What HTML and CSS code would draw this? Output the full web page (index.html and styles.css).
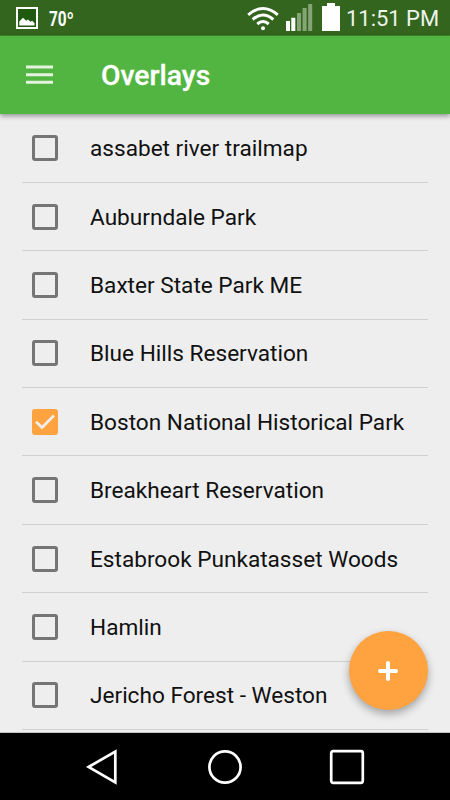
FILE: index.html
```html
<!DOCTYPE html>
<html lang="en">
<head>
<meta charset="utf-8">
<title>Overlays</title>
<link rel="stylesheet" href="styles.css">
</head>
<body>
<div class="screen">
  <div class="status">
    <svg class="picture" width="22" height="22" viewBox="0 0 22 22"><rect x="1" y="1" width="20" height="20" fill="#1f5a10" stroke="#fff" stroke-width="2"/><path d="M3.300 18.500v-4l3.700-3.800 3.200 3 1.800-1.200 2.500 2.200 1.700-1 2.300 2.200v2.600z" fill="#fff"/></svg>
    <span class="temp">70º</span>
    <svg class="wifi" width="32" height="25" viewBox="0 0 32 25" fill="none" stroke="#fff" stroke-width="3"><path d="M1.200 8.800Q16-3.800 30.800 8.800"/><path d="M5.700 13.500Q16 4.500 26.300 13.500"/><path d="M10.300 18Q16 13 21.700 18"/><circle cx="16" cy="22.300" r="2" fill="#fff" stroke="none"/></svg>
    <svg class="signal" width="27" height="27" viewBox="0 0 27 27" fill="#fff"><path d="M0 17h4v10H0zM5.300 13.700h4V27h-4z"/><path d="M11 9h4v18h-4zM16.600 4h4v23h-4zM22.200 0h4v27h-4z" fill="#86a577"/></svg>
    <svg class="battery" width="18" height="28" viewBox="0 0 18 28"><path d="M5 0h8v3h5v25H0V3h5z" fill="#fff"/></svg>
    <span class="clock">11:51 PM</span>
  </div>
  <header class="bar">
    <svg class="menu" width="27" height="20" viewBox="0 0 27 20" fill="#e3f3dd"><path d="M0 .5h27v3H0zM0 8.200h27v3H0zM0 15.700h27v3H0z"/></svg>
    <h1>Overlays</h1>
  </header>
  <main class="list">
    <label class="row"><span class="box"></span><span class="name">assabet river trailmap</span></label>
    <label class="row"><span class="box"></span><span class="name">Auburndale Park</span></label>
    <label class="row"><span class="box"></span><span class="name">Baxter State Park ME</span></label>
    <label class="row"><span class="box"></span><span class="name">Blue Hills Reservation</span></label>
    <label class="row"><span class="box checked"><svg width="26" height="26" viewBox="0 0 26 26"><path d="M4 12.700l6 5.800L22 6.500" fill="none" stroke="#eee" stroke-width="2.800"/></svg></span><span class="name">Boston National Historical Park</span></label>
    <label class="row"><span class="box"></span><span class="name">Breakheart Reservation</span></label>
    <label class="row"><span class="box"></span><span class="name">Estabrook Punkatasset Woods</span></label>
    <label class="row"><span class="box"></span><span class="name">Hamlin</span></label>
    <label class="row"><span class="box"></span><span class="name">Jericho Forest - Weston</span></label>
  </main>
  <button class="fab" aria-label="Add"><svg width="20" height="20" viewBox="0 0 20 20"><path d="M10 2v16M2 10h16" stroke="#fff" stroke-width="4" stroke-linecap="round"/></svg></button>
  <nav class="nav">
    <svg width="32" height="36" viewBox="0 0 32 36"><path d="M2.500 18L29.300 2.500v31z" fill="none" stroke="#fff" stroke-width="2.700"/></svg>
    <svg width="36" height="36" viewBox="0 0 36 36"><circle cx="18" cy="18" r="15.600" fill="none" stroke="#fff" stroke-width="2.700"/></svg>
    <svg width="36" height="36" viewBox="0 0 36 36"><rect x="2.200" y="2.200" width="31.600" height="31.600" rx="2" fill="none" stroke="#fff" stroke-width="2.700"/></svg>
  </nav>
</div>
</body>
</html>
```

FILE: styles.css
```css
* { box-sizing: border-box; }
body { margin: 0; font-family: Roboto, sans-serif; }
svg { display: block; flex: none; }
.screen { position: relative; display: flex; flex-direction: column; width: 450px; height: 800px; overflow: hidden; background: #eee; }
.status { display: flex; align-items: flex-start; height: 36px; flex: none; padding-left: 16px; background: #33651e; color: #fff; border-bottom: 1px solid #3d8429; }
.picture { margin-top: 7px; }
.temp { margin: 7px 0 0 11px; width: 30px; font-size: 20px; line-height: 24px; font-weight: 700; transform: scaleX(.77); transform-origin: left; }
.wifi { margin: 6px 0 0 168px; }
.signal { margin: 4px 0 0 7px; }
.battery { margin: 3px 0 0 9px; }
.clock { margin: 4px 0 0 6px; font-size: 22.500px; line-height: 28px; white-space: nowrap; color: #eef3ec; transform: scaleX(.975); transform-origin: left; }
.bar { display: flex; align-items: center; height: 78px; flex: none; padding-left: 26px; background: #53b541; box-shadow: 0 2px 5px rgba(0,0,0,.4); z-index: 1; }
h1 { margin: 2px 0 0 48px; color: #fff; font-size: 28.300px; line-height: 32px; font-weight: 500; -webkit-text-stroke: .3px #fff; }
.list { flex: 1; min-height: 0; padding: .5px 22px 0; border-bottom: 1px solid #c4c4c4; }
.row { display: flex; align-items: center; height: 68.400px; padding-left: 10px; border-bottom: 1px solid #d0d0d0; }
.box { width: 26px; height: 26px; flex: none; border: 3px solid #757575; border-radius: 3px; }
.checked { border: 0; background: #ffa240; }
.name { margin: 2px 0 0 32px; font-size: 22.620px; line-height: 30px; color: #111; white-space: nowrap; }
.fab { position: absolute; left: 348.500px; top: 631px; width: 79px; height: 79px; display: grid; place-items: center; padding: 0; border: 0; border-radius: 50%; background: #ffa240; box-shadow: 0 4px 8px rgba(0,0,0,.32); }
.nav { display: flex; align-items: center; height: 67px; flex: none; padding-left: 86px; background: #000; }
.nav svg + svg { margin-left: 88.500px; }
.nav svg:nth-child(3) { margin-left: 86.500px; }
```
